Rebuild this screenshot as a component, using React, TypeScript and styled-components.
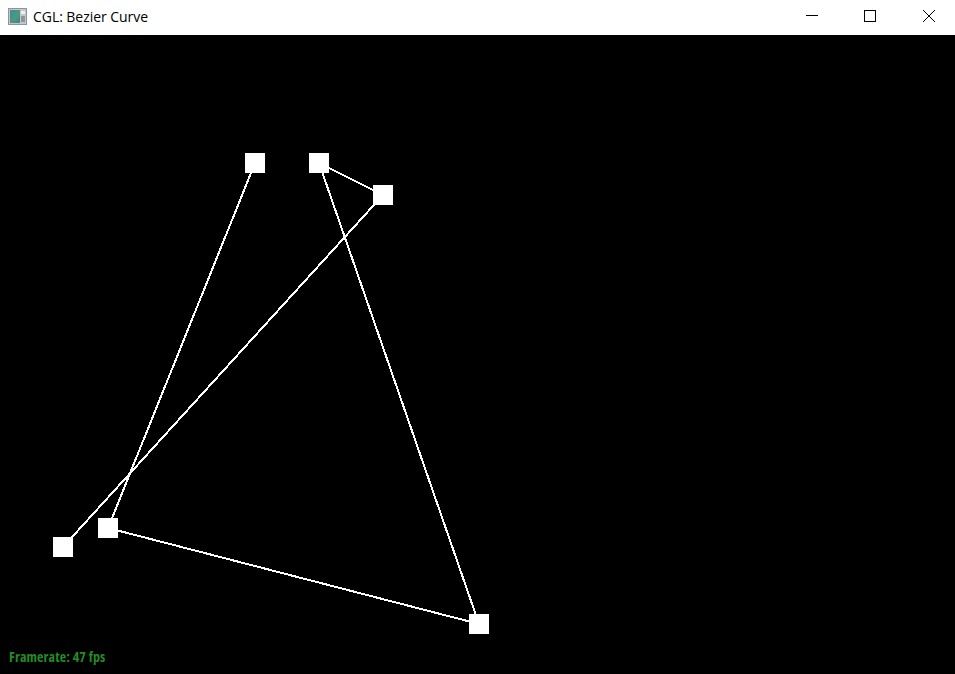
import styled, { createGlobalStyle } from 'styled-components';

const GlobalStyle = createGlobalStyle`
    html, body {
        margin: 0;
        padding: 0;
        background: #000;
    }
`;

const Window = styled.div`
    width: 955px;
    height: 674px;
    display: flex;
    flex-direction: column;
    overflow: hidden;
`;

const TitleBar = styled.div`
    height: 35px;
    flex: none;
    background: #fff;
    display: flex;
    align-items: center;
    padding-left: 8px;
`;

const AppIcon = styled.svg`
    width: 19px;
    height: 17px;
    flex: none;
    margin-top: -2px;
`;

const Title = styled.span`
    margin-left: 6px;
    flex: 1;
    margin-top: -2px;
    font-family: 'Open Sans', 'Liberation Sans', sans-serif;
    font-size: 14px;
    letter-spacing: -0.05px;
    color: #000;
`;

const WindowButton = styled.button`
    width: 58px;
    height: 35px;
    padding: 0;
    border: 0;
    background: transparent;
    display: flex;
    align-items: center;
    justify-content: center;
`;

const ButtonGlyph = styled.svg`
    width: 12px;
    height: 12px;
    margin-top: -3px;
    margin-left: 4px;
`;

const CloseGlyph = styled(ButtonGlyph)`
    margin-left: 6px;
`;

const Viewport = styled.div`
    flex: 1;
    position: relative;
    background: #000;
`;

const Scene = styled.svg`
    display: block;
    width: 955px;
    height: 639px;
`;

const Framerate = styled.div`
    position: absolute;
    left: 9px;
    bottom: 9px;
    font-family: 'Open Sans', 'Noto Sans', sans-serif;
    font-size: 14px;
    font-stretch: condensed;
    font-weight: 700;
    letter-spacing: 0.12px;
    line-height: 16px;
    color: #258a25;
`;

// control points of the curve, in window coordinates
const controlPoints = [
    [255, 163],
    [108, 528],
    [479, 624],
    [319, 163],
    [383, 195],
    [63, 547],
];

const polyline = controlPoints.map(([x, y]) => `${x},${y}`).join(' ');

export default function App() {
    return (
        <Window>
            <GlobalStyle />
            <TitleBar>
                <AppIcon viewBox="0 0 19 17">
                    <defs>
                        <linearGradient id="iconFill" x1="0" y1="0" x2="1" y2="1">
                            <stop offset="0" stopColor="#3b8a9c" />
                            <stop offset="0.55" stopColor="#4f9a7c" />
                            <stop offset="1" stopColor="#3f7f95" />
                        </linearGradient>
                    </defs>
                    <rect x="0.5" y="0.5" width="18" height="16" fill="#c4c8cc" stroke="#8d949a" />
                    <rect x="2" y="2" width="10" height="13" fill="url(#iconFill)" />
                    <rect x="13" y="3" width="4" height="3" fill="#eef0f0" />
                    <rect x="13" y="8" width="4" height="6" fill="#8e979c" />
                </AppIcon>
                <Title>CGL: Bezier Curve</Title>
                <WindowButton aria-label="Minimize">
                    <ButtonGlyph viewBox="0 0 12 12">
                        <path d="M0 5.5 H12" stroke="#000" strokeWidth="1" fill="none" />
                    </ButtonGlyph>
                </WindowButton>
                <WindowButton aria-label="Maximize">
                    <ButtonGlyph viewBox="0 0 12 12">
                        <rect x="0.5" y="0.5" width="11" height="11" stroke="#000" fill="none" />
                    </ButtonGlyph>
                </WindowButton>
                <WindowButton aria-label="Close">
                    <CloseGlyph viewBox="0 0 12 12">
                        <path d="M0 0 L12 12 M12 0 L0 12" stroke="#000" strokeWidth="1" fill="none" />
                    </CloseGlyph>
                </WindowButton>
            </TitleBar>
            <Viewport>
                <Scene viewBox="0 35 955 639">
                    <polyline points={polyline} fill="none" stroke="#fff" strokeWidth="2" shapeRendering="crispEdges" />
                    {controlPoints.map(([x, y]) => (
                        <rect key={`${x}-${y}`} x={x - 10} y={y - 10} width="20" height="20" fill="#fff" />
                    ))}
                </Scene>
                <Framerate>Framerate: 47 fps</Framerate>
            </Viewport>
        </Window>
    );
}
